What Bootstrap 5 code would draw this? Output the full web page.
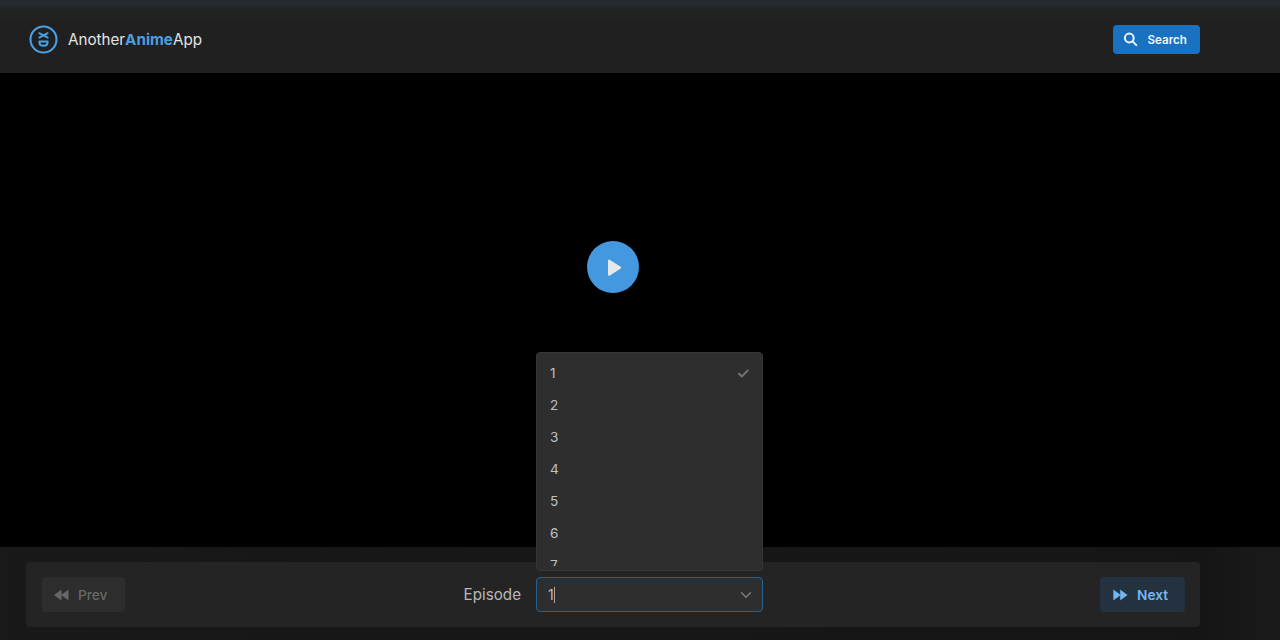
<!DOCTYPE html>
<html lang="en" data-bs-theme="dark">
<head>
<meta charset="utf-8">
<meta name="viewport" content="width=device-width, initial-scale=1">
<title>AnotherAnimeApp</title>
<link href="https://cdn.jsdelivr.net/npm/bootstrap@5.3.0/dist/css/bootstrap.min.css" rel="stylesheet">
<style>
  body { font-family: Inter, "Liberation Sans", sans-serif; background: #171717; color: #c1c2c5; height: 640px; line-height: 1.2; }
  svg { display: block; flex: none; }
  .app-header { height: 73px; padding: 6px 80px 0 29px; background: linear-gradient(#252b2f 0 5px, #222425 7px, #202020 22px); }
  .brand-name { font-size: 15.2px; color: #e4e4e4; margin-left: 10px; padding-top: 1px; }
  .brand-name b { color: #4a9fe3; font-weight: 700; }
  .btn-search { width: 87px; height: 29px; background: #1971c2; color: #f1f6fb; border: 0; border-radius: 4px; font-size: 11.6px; font-weight: 600; padding: 0 0 0 10px; }
  .btn-search span { margin-left: 9.5px; padding-top: 2px; }
  .player { height: 474px; background: #000; padding: 168px 53.5px 0 0; }
  .btn-play { width: 52px; height: 52px; background: #4398df; border: 0; padding: 0; }
  .lower { height: 93px; padding: 15px 80px 13px 26px; background: linear-gradient(90deg, #191919 0, #171717 30%, #161616 85%, #151515 94%, #191919 98%); }
  .controls { height: 65px; background: #242424; border-radius: 4px; padding: 0 15px 0 16px; }
  .btn-step { height: 35px; border: 0; border-radius: 4px; font-size: 13.7px; font-weight: 600; padding: 0; }
  .btn-step span { margin-left: 9px; padding-top: 1px; }
  .btn-prev, .btn-prev:disabled { width: 83px; background: #2d2d2d; color: #686868; opacity: 1; font-weight: 500; padding-left: 12px; }
  .btn-next { width: 85px; background: #24323f; color: #74b6f1; padding-left: 13px; }
  .episode-group { width: 301px; }
  .episode-label { font-size: 15.2px; color: #b9b9b9; margin-right: 15px; padding-top: 1px; }
  .episode-picker { width: 227px; }
  .episode-field { height: 35px; background: #2e2e2e; border: 1px solid #25608f; border-radius: 4px; padding: 0 10px 0 11px; font-size: 14px; color: #bcbcbc; }
  .episode-field span { padding-top: 1px; }
  .caret { width: 1px; height: 16px; background: #a5a5a5; }
  .episode-menu { left: 0; bottom: 41px; width: 227px; height: 219px; background: #2e2e2e; border: 1px solid #363636; border-radius: 4px; padding: 4px; }
  .episode-list { height: 209px; overflow: hidden; }
  .episode-item { height: 32px; padding: 1px 8px 0 9px; font-size: 13.6px; color: #bfc0c1; }
</style>
</head>
<body class="overflow-hidden">
<header class="app-header d-flex align-items-center justify-content-between">
  <div class="d-flex align-items-center">
    <svg width="29" height="29" viewBox="0 0 29 29" fill="none" stroke="#4a9fe3" stroke-width="2.1" stroke-linecap="round" stroke-linejoin="round">
      <circle cx="14.5" cy="14.5" r="13"/>
      <path d="M10.3 8.2l4.2 2.1 4.2-2.1M10.3 12.6l4.2-2.3 4.2 2.3" stroke-width="1.9"/>
      <path d="M10.4 16.6h8.2v.7c0 2.2-1.7 3.5-4.1 3.5s-4.1-1.3-4.1-3.5z" stroke-width="2"/>
    </svg>
    <div class="brand-name">Another<b>Anime</b>App</div>
  </div>
  <button class="btn btn-search d-flex align-items-center" type="button">
    <svg width="15" height="15" viewBox="0 0 15 15" fill="none" stroke="#f1f6fb" stroke-width="2" stroke-linecap="round"><circle cx="6.3" cy="6" r="4.4"/><path d="M9.6 9.4l3.7 3.7"/></svg>
    <span>Search</span>
  </button>
</header>

<main>
  <section class="player d-flex justify-content-center align-items-start">
    <button class="btn btn-play rounded-circle d-flex align-items-center justify-content-center" type="button" aria-label="Play">
      <svg width="52" height="52" viewBox="0 0 52 52" fill="#e6e9ec" stroke="#e6e9ec" stroke-width="2" stroke-linejoin="round"><path d="M22 19.6v14.2l11.2-7.1z"/></svg>
    </button>
  </section>

  <section class="lower">
    <div class="controls d-flex align-items-center justify-content-between">
      <button class="btn btn-step btn-prev d-flex align-items-center" type="button" disabled>
        <svg width="15" height="12" viewBox="0 0 15 12" fill="currentColor"><path d="M7.2 1v10L.4 6zM14.2 1v10L7.4 6z" stroke="currentColor" stroke-width=".5" stroke-linejoin="round"/></svg>
        <span>Prev</span>
      </button>
      <div class="episode-group d-flex align-items-center justify-content-end">
        <label class="episode-label">Episode</label>
        <div class="episode-picker position-relative">
          <div class="episode-field d-flex align-items-center">
            <span>1</span><i class="caret"></i>
            <svg class="ms-auto" width="12" height="8" viewBox="0 0 12 8" fill="none" stroke="#7f8184" stroke-width="1.3" stroke-linecap="round" stroke-linejoin="round"><path d="M1.5 1.8L6 6.2l4.5-4.4"/></svg>
          </div>
          <div class="episode-menu position-absolute">
            <div class="episode-list">
              <div class="episode-item d-flex align-items-center justify-content-between"><span>1</span>
                <svg width="13" height="10" viewBox="0 0 13 10" fill="none" stroke="#747474" stroke-width="1.8" stroke-linecap="round" stroke-linejoin="round"><path d="M1.8 4.5l3 3 6-6"/></svg></div>
              <div class="episode-item d-flex align-items-center">2</div>
              <div class="episode-item d-flex align-items-center">3</div>
              <div class="episode-item d-flex align-items-center">4</div>
              <div class="episode-item d-flex align-items-center">5</div>
              <div class="episode-item d-flex align-items-center">6</div>
              <div class="episode-item d-flex align-items-center">7</div>
            </div>
          </div>
        </div>
      </div>
      <button class="btn btn-step btn-next d-flex align-items-center" type="button">
        <svg width="15" height="12" viewBox="0 0 15 12" fill="currentColor"><path d="M.6 1v10l6.8-5zM7.4 1v10l6.8-5z" stroke="currentColor" stroke-width=".5" stroke-linejoin="round"/></svg>
        <span>Next</span>
      </button>
    </div>
  </section>
</main>
<script src="https://cdn.jsdelivr.net/npm/bootstrap@5.3.0/dist/js/bootstrap.bundle.min.js"></script>
</body>
</html>
